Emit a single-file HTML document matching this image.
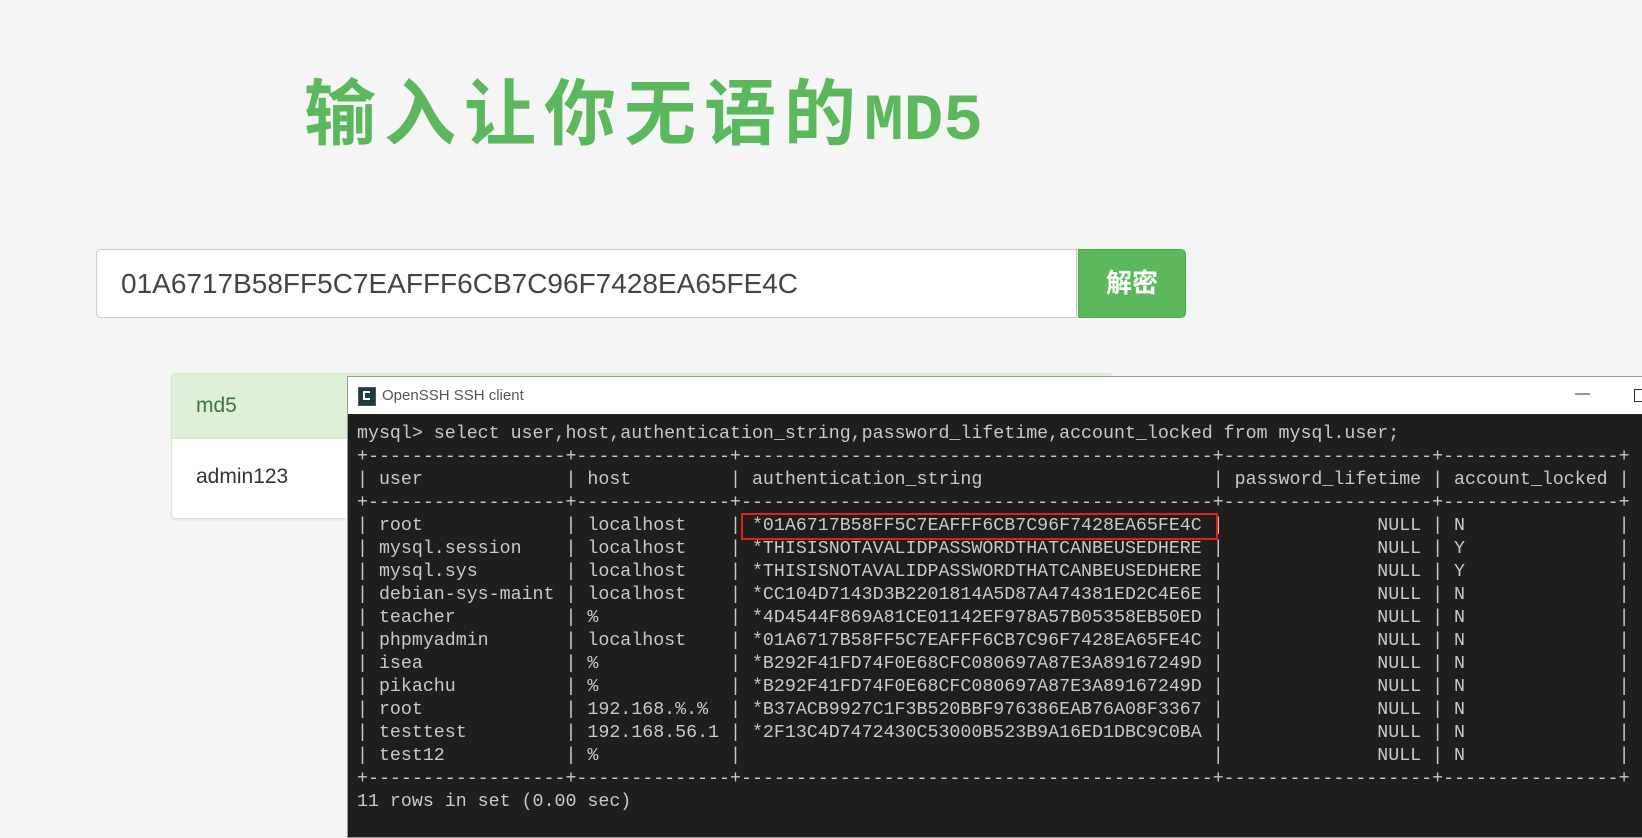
<!DOCTYPE html>
<html><head><meta charset="utf-8"><style>
body{margin:0;width:1642px;height:825px;background:#f5f5f5;position:relative;overflow:hidden;font-family:"Liberation Sans","Noto Sans CJK SC",sans-serif}
.t{position:absolute;left:304px;top:70px;font-size:72px;font-weight:bold;color:#5cb85c;letter-spacing:8px;white-space:nowrap;line-height:90px}
.t span{font-family:"Liberation Mono",monospace;font-size:66px;letter-spacing:0}
.in{position:absolute;left:96px;top:249px;width:981px;height:69px;border:1px solid #ccc;border-radius:5px 0 0 5px;background:#fff;box-sizing:border-box;font-size:28px;color:#444;line-height:67px;padding-left:24px}
.btn{position:absolute;left:1078px;top:249px;width:108px;height:69px;background:#5cb85c;border:1px solid #4cae4c;border-radius:0 5px 5px 0;box-sizing:border-box;color:#fff;font-size:26px;font-weight:bold;text-align:center;line-height:66px}
.card{position:absolute;left:171px;top:373px;width:940px;height:144px;border:1px solid #d6e9c6;border-radius:4px;background:#fff;box-shadow:0 1px 2px rgba(0,0,0,.08)}
.ch{height:64px;background:#dff0d8;border-bottom:1px solid #d6e9c6;color:#3c763d;font-size:21px;line-height:64px;padding-left:24px}
.cb{font-size:21px;line-height:76px;padding-left:24px;color:#333}
.w{position:absolute;left:347px;top:376px;width:1300px;height:460px;background:#1e1e1c;border:1px solid #999}
.tb{height:37px;background:#fff;font-size:15px;color:#555;line-height:37px;padding-left:34px;position:relative}
.ic{position:absolute;left:10px;top:10px;width:16px;height:17px;background:#1d3a3e;border:1px solid #555}
.ic:after{content:"";position:absolute;left:4px;top:3px;width:7px;height:9px;border:2px solid #fff;border-right:none;box-sizing:border-box}
pre{margin:0;padding:9px 0 0 9px;font-family:"Liberation Mono",monospace;font-size:18.3px;line-height:23px;color:#c8c8c8}
.red{position:absolute;left:393px;top:136px;width:477px;height:27px;border:2px solid #e0201e;box-sizing:border-box}
</style></head><body>
<div class="t">输入让你无语的<span>MD5</span></div>
<div class="in">01A6717B58FF5C7EAFFF6CB7C96F7428EA65FE4C</div>
<div class="btn">解密</div>
<div class="card"><div class="ch">md5</div><div class="cb">admin123</div></div>
<div class="w">
<div class="tb"><div class="ic"></div>OpenSSH SSH client<span style="position:absolute;left:1227px;top:-2px;color:#333">—</span><span style="position:absolute;left:1286px;top:12px;width:11px;height:11px;border:1px solid #333"></span></div>
<pre>mysql&gt; select user,host,authentication_string,password_lifetime,account_locked from mysql.user;
+------------------+--------------+-------------------------------------------+-------------------+----------------+
| user             | host         | authentication_string                     | password_lifetime | account_locked |
+------------------+--------------+-------------------------------------------+-------------------+----------------+
| root             | localhost    | *01A6717B58FF5C7EAFFF6CB7C96F7428EA65FE4C |              NULL | N              |
| mysql.session    | localhost    | *THISISNOTAVALIDPASSWORDTHATCANBEUSEDHERE |              NULL | Y              |
| mysql.sys        | localhost    | *THISISNOTAVALIDPASSWORDTHATCANBEUSEDHERE |              NULL | Y              |
| debian-sys-maint | localhost    | *CC104D7143D3B2201814A5D87A474381ED2C4E6E |              NULL | N              |
| teacher          | %            | *4D4544F869A81CE01142EF978A57B05358EB50ED |              NULL | N              |
| phpmyadmin       | localhost    | *01A6717B58FF5C7EAFFF6CB7C96F7428EA65FE4C |              NULL | N              |
| isea             | %            | *B292F41FD74F0E68CFC080697A87E3A89167249D |              NULL | N              |
| pikachu          | %            | *B292F41FD74F0E68CFC080697A87E3A89167249D |              NULL | N              |
| root             | 192.168.%.%  | *B37ACB9927C1F3B520BBF976386EAB76A08F3367 |              NULL | N              |
| testtest         | 192.168.56.1 | *2F13C4D7472430C53000B523B9A16ED1DBC9C0BA |              NULL | N              |
| test12           | %            |                                           |              NULL | N              |
+------------------+--------------+-------------------------------------------+-------------------+----------------+
11 rows in set (0.00 sec)</pre>
<div class="red"></div>
</div>
</body></html>
